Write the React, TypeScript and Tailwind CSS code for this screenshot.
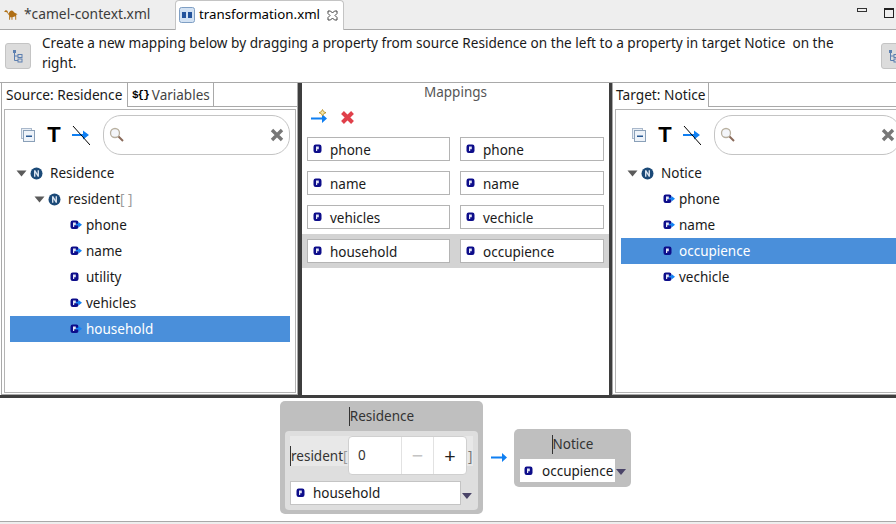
import React from "react";

const PIcon = ({ arrow = false }: { arrow?: boolean }) => (
  <svg width="12" height="10" viewBox="0 0 12 10" className="shrink-0">
    <rect x="0.500" y="0.500" width="8" height="8.500" rx="2.200" fill="#0d0d8a" />
    <path d="M3 2.500h2.800v2.800H4.200V7H3z" fill="#e3e6f6" />
    {arrow && <path d="M6 3.800h2.500V2L12 4.700 8.500 7.400V5.600H6z" fill="#1283f5" />}
  </svg>
);

const NIcon = () => (
  <svg width="13" height="13" viewBox="0 0 13 13" className="shrink-0">
    <circle cx="6.500" cy="6.500" r="6" fill="#1c4a78" />
    <path d="M4 3.200h1.400L7.600 7V3.200H9v6.600H7.700L5.400 6v3.800H4z" fill="#d8e2ee" />
  </svg>
);

const Tri = () => (
  <svg width="11" height="7" viewBox="0 0 11 7" className="shrink-0">
    <path d="M0.500 0.500h10L5.500 6.500z" fill="#5b5b5b" />
  </svg>
);

const BlueArrow = ({ star = false }: { star?: boolean }) => (
  <svg width="18" height="16" viewBox="0 0 18 16" className="shrink-0">
    <path d="M1 8.500h11V5l5 4.500-5 4.500v-3.500H1z" fill="#0f7ff2" />
    {star && <path d="M12.500 0.500l1.200 2.200 2.300 1-2.300 1-1.200 2.200-1.200-2.200-2.300-1 2.300-1z" fill="#f3e6a8" stroke="#b58a1c" strokeWidth="0.800" />}
  </svg>
);

const TreeButton = () => (
  <div className="w-[26px] h-[26px] mt-[13px] shrink-0 rounded-[3px] bg-[#dcdcdc] border border-[#c4c4c4] flex items-center justify-center">
    <svg width="12" height="14" viewBox="0 0 12 14">
      <path d="M2.500 3v8.500H6M2.500 7H6" fill="none" stroke="#5c7fb0" />
      <rect x="1" y="1" width="3" height="3" fill="#5c7fb0" />
      <rect x="6" y="5.500" width="4" height="3" fill="none" stroke="#5c7fb0" />
      <rect x="6" y="10" width="4" height="3" fill="none" stroke="#5c7fb0" />
    </svg>
  </div>
);

const Toolbar = () => (
  <div className="flex items-center h-[40px] pl-[11px]">
    <svg width="14" height="14" viewBox="0 0 14 14" className="shrink-0">
      <rect x="0.500" y="0.500" width="10" height="10" fill="#e8eef5" stroke="#a9b8cb" />
      <rect x="2.500" y="2.500" width="11" height="11" fill="#eef3f9" stroke="#8aa0b8" />
      <path d="M5 7.500h6V9H5z" fill="#2a5a94" />
    </svg>
    <span className="ml-[12px] w-[14px] text-[22px] font-bold leading-none text-black text-center font-['Liberation_Sans',sans-serif]">T</span>
    <svg width="18" height="22" viewBox="0 0 18 22" className="shrink-0 ml-[11px]">
      <path d="M0 10h11V6.500l6 4.500-6 4.500V12H0z" fill="#0f7ff2" />
      <path d="M1 2l17 19" stroke="#000" strokeWidth="1" />
    </svg>
    <div className="flex items-center justify-between w-[187px] shrink-0 h-[40px] rounded-[18px] border border-[#c4c4c4] bg-white px-[4px] ml-[13px]">
      <svg width="18" height="18" viewBox="0 0 18 18">
        <circle cx="7" cy="7" r="4.500" fill="#f4f6fa" stroke="#b8b0a0" strokeWidth="1.300" />
        <path d="M10.500 10.500l4.500 4.500" stroke="#8a6a5a" strokeWidth="2" />
      </svg>
      <svg width="16" height="16" viewBox="0 0 16 16">
        <path d="M3 3l10 10M13 3L3 13" stroke="#777" strokeWidth="3.400" />
      </svg>
    </div>
  </div>
);

const TreeRow = ({ indent, icon, label, selected, suffix, gap = "ml-[4px]" }: { indent: string; icon: React.ReactNode; label: string; selected?: boolean; suffix?: string; gap?: string }) => (
  <div className={`flex items-center h-[26px] ${indent} ${selected ? "bg-[#4a8fda] text-white" : "text-[#1a1a1a]"}`}>
    {icon}
    <span className={gap}>{label}{suffix && <span className="text-[#9a9a9a]">{suffix}</span>}</span>
  </div>
);

const MapField = ({ label, w }: { label: string; w: string }) => (
  <div className={`flex items-center h-[24px] ${w} bg-white border border-[#b4b4b4] pl-[5px] gap-[5px] text-[#1a1a1a]`}>
    <PIcon />
    <span className="pt-[2px]">{label}</span>
  </div>
);

const MapRow = ({ a, b, active }: { a: string; b: string; active?: boolean }) => (
  <div className={`flex items-center h-[34px] pl-[5px] gap-[10px] ${active ? "bg-[#d3d3d3]" : ""}`}>
    <MapField label={a} w="w-[143px]" />
    <MapField label={b} w="w-[144px]" />
  </div>
);

const NodeIcon = () => (
  <>
    <Tri />
    <span className="w-[3px]" />
    <NIcon />
  </>
);

export default function App() {
  return (
    <div className="w-[896px] h-[524px] overflow-hidden bg-white flex flex-col text-[13.5px] font-['Noto_Sans',sans-serif] text-[#1a1a1a]">
      {/* Tabs */}
      <div className="h-[30px] shrink-0 bg-[#eeeeee] border-b border-[#a9a9a9] flex">
        <div className="w-[175px] flex items-center pl-[4px] gap-[5px] text-[#3c3c3c] text-[13.800px] pb-[1px]">
          <svg width="15" height="14" viewBox="0 0 16 14" className="shrink-0">
            <path d="M0 4.500l2-1.800 1.800 1 .6 3c1-.2 1.600-3.400 3.600-3.400s2.300 2.200 4 2.700l2.500 1.200-1.500.6V13h-1V9.500l-3 1V13H8v-2.500H6.500V13h-1V8.500L3 5z" fill="#b06f14" />
          </svg>
          <span className="whitespace-nowrap">*camel-context.xml</span>
        </div>
        <div className="w-[169px] h-[30px] bg-white border-x border-t border-[#c4c4c4] rounded-t-[4px] flex items-center pl-[3px] gap-[4px] text-black text-[13.300px] pb-[1px]">
          <svg width="16" height="16" viewBox="0 0 16 16" className="shrink-0">
            <rect x="0.500" y="0.500" width="15" height="15" rx="2" fill="#d3e2f3" stroke="#7f9fc4" />
            <rect x="3" y="5" width="4" height="6" fill="#24549c" />
            <rect x="9" y="5" width="4" height="6" fill="#24549c" />
          </svg>
          <span className="whitespace-nowrap">transformation.xml</span>
          <svg width="11" height="11" viewBox="0 0 11 11" className="ml-[3px] shrink-0">
            <path d="M1 1h2.500L5.500 3 7.500 1H10v2.500L8 5.500 10 7.500V10H7.500L5.500 8 3.500 10H1V7.500L3 5.500 1 3.500z" fill="none" stroke="#444" />
          </svg>
        </div>
        <div className="flex-1 flex justify-end items-start pt-[8px] pr-[2px] gap-[17px]">
          <div className="w-[10px] h-[4px] border border-[#333]" />
          <div className="w-[10px] h-[10px] border border-[#222] border-t-2" />
        </div>
      </div>

      {/* Instruction */}
      <div className="h-[52px] shrink-0 flex pl-[5px]">
        <TreeButton />
        <p className="ml-[11px] mt-[3px] w-[800px] shrink-0 leading-[20px] text-[13.600px]">
          Create a new mapping below by dragging a property from source Residence on the left to a property in target Notice&nbsp; on the right.
        </p>
        <div className="ml-[39px] shrink-0">
          <TreeButton />
        </div>
      </div>

      {/* Panels */}
      <div className="h-[316px] shrink-0 flex border-t border-[#a9a9a9] border-b-[3px] border-b-[#3e3e3e]">
        {/* Source */}
        <div className="w-[302px] shrink-0 flex flex-col pl-[1px] border-r-4 border-[#3e3e3e]">
          <div className="h-[24px] flex border-x border-[#a9a9a9] shrink-0">
            <div className="w-[126px] flex items-center pl-[4px] pt-[1px] border-r border-[#a9a9a9] whitespace-nowrap text-[#1a1a1a] text-[13.700px]">Source: Residence</div>
            <div className="w-[86px] flex items-center pl-[4px] pt-[1px] border-r border-b border-[#a9a9a9] whitespace-nowrap text-[#444]">
              <b className="text-[11px] font-['Liberation_Mono',monospace] text-black mr-[3px] tracking-[-1px]">$&#123;&#125;</b>Variables
            </div>
            <div className="flex-1 border-b border-[#a9a9a9]" />
          </div>
          <div className="flex-1 min-h-0 border-x border-b border-[#a9a9a9] pl-[2px] pr-[1px] pt-[2px] pb-[1px]">
            <div className="h-full border border-[#b4b4b4] px-[5px] pt-[5px]">
              <Toolbar />
              <div className="mt-[5px]">
                <TreeRow indent="pl-[6px]" icon={<NodeIcon />} label="Residence" gap="ml-[7px]" />
                <TreeRow indent="pl-[24px]" icon={<NodeIcon />} label="resident" suffix="[ ]" gap="ml-[7px]" />
                <TreeRow indent="pl-[60px]" icon={<PIcon arrow />} label="phone" />
                <TreeRow indent="pl-[60px]" icon={<PIcon arrow />} label="name" />
                <TreeRow indent="pl-[60px]" icon={<PIcon />} label="utility" />
                <TreeRow indent="pl-[60px]" icon={<PIcon arrow />} label="vehicles" />
                <TreeRow indent="pl-[60px]" icon={<PIcon arrow />} label="household" selected />
              </div>
            </div>
          </div>
        </div>

        {/* Mappings */}
        <div className="w-[307px] shrink-0 flex flex-col">
          <div className="text-center text-[#555] h-[21px] leading-[18px]">Mappings</div>
          <div className="flex items-center h-[24px] mt-[1px] pl-[8px] gap-[12px]">
            <BlueArrow star />
            <svg width="15" height="15" viewBox="0 0 15 15">
              <path d="M2.500 2.500l10 10M12.500 2.500l-10 10" stroke="#e0404a" strokeWidth="4" />
            </svg>
          </div>
          <div className="mt-[3px]">
            <MapRow a="phone" b="phone" />
            <MapRow a="name" b="name" />
            <MapRow a="vehicles" b="vechicle" />
            <MapRow a="household" b="occupience" active />
          </div>
        </div>

        {/* Target */}
        <div className="flex-1 min-w-0 flex flex-col border-l-[3px] border-[#3e3e3e]">
          <div className="h-[24px] flex border-l border-[#a9a9a9] shrink-0">
            <div className="w-[96px] flex items-center pl-[3px] pt-[1px] border-r border-[#a9a9a9] whitespace-nowrap text-[13.700px]">Target: Notice</div>
            <div className="flex-1 border-b border-[#a9a9a9]" />
          </div>
          <div className="flex-1 min-h-0 border-l border-b border-[#a9a9a9] pl-[2px] pb-[1px] pt-[2px]">
            <div className="h-full w-[300px] border border-[#b4b4b4] px-[5px] pt-[5px]">
              <Toolbar />
              <div className="mt-[5px]">
                <TreeRow indent="pl-[6px]" icon={<NodeIcon />} label="Notice" gap="ml-[7px]" />
                <TreeRow indent="pl-[42px]" icon={<PIcon arrow />} label="phone" />
                <TreeRow indent="pl-[42px]" icon={<PIcon arrow />} label="name" />
                <TreeRow indent="pl-[42px]" icon={<PIcon />} label="occupience" selected />
                <TreeRow indent="pl-[42px]" icon={<PIcon arrow />} label="vechicle" />
              </div>
            </div>
          </div>
        </div>
      </div>

      {/* Diagram */}
      <div className="flex-1 min-h-0 flex items-start pl-[280px] pt-[3px] border-b border-[#a9a9a9]">
        <div className="w-[203px] h-[113px] shrink-0 rounded-[5px] bg-[#bfbfbf] px-[5px] flex flex-col">
          <div className="h-[30px] shrink-0 flex items-center justify-center text-[#333]">
            <span className="border-l border-[#333] leading-[19px]">Residence</span>
          </div>
          <div className="h-[79px] rounded-[4px] bg-[#dedede] px-[5px] pt-[5px]">
            <div className="relative h-[30px] w-[183px] bg-[#e8e8e8] flex items-end text-[#333]">
              <span className="border-l border-[#333] leading-[20px]">resident<span className="text-[#999]">[</span></span>
              <div className="absolute left-[58px] top-0 w-[119px] h-[39px] bg-white rounded-[4px] border border-[#d0d0d0] flex items-center">
                <span className="w-[52px] pl-[9px] text-[#333]">0</span>
                <span className="w-[33px] h-full border-x border-[#e2e2e2] flex items-center justify-center text-[#c4c4c4] text-[20px]">−</span>
                <span className="flex-1 flex items-center justify-center text-[#222] text-[20px]">+</span>
              </div>
              <span className="absolute left-[178px] bottom-0 leading-[20px] text-[#777]">]</span>
            </div>
            <div className="flex items-center mt-[15px]">
              <div className="w-[173px] h-[24px] bg-white border border-[#c4c4c4] flex items-center pl-[5px] gap-[5px]">
                <PIcon />
                <span className="pt-[1px]">household</span>
              </div>
              <svg width="12" height="6" viewBox="0 0 12 6" className="mt-[5px]"><path d="M1 0h10L6 6z" fill="#4a4468" /></svg>
            </div>
          </div>
        </div>
        <div className="mt-[47px] ml-[7px] mr-[6px] shrink-0">
          <BlueArrow />
        </div>
        <div className="mt-[28px] w-[117px] h-[58px] shrink-0 rounded-[5px] bg-[#bfbfbf] flex flex-col">
          <div className="h-[30px] shrink-0 flex items-center justify-center text-[#333]">
            <span className="border-l border-[#333] leading-[19px]">Notice</span>
          </div>
          <div className="flex items-center pl-[6px]">
            <div className="w-[95px] h-[23px] bg-white flex items-center pl-[4px] gap-[6px] whitespace-nowrap">
              <PIcon />
              <span className="pt-[1px]">occupience</span>
            </div>
            <svg width="12" height="6" viewBox="0 0 12 6" className="mt-[2px]"><path d="M1 0h10L6 6z" fill="#4a4468" /></svg>
          </div>
        </div>
      </div>
      <div className="h-[2px] shrink-0 bg-[#eeeeee]" />
    </div>
  );
}
